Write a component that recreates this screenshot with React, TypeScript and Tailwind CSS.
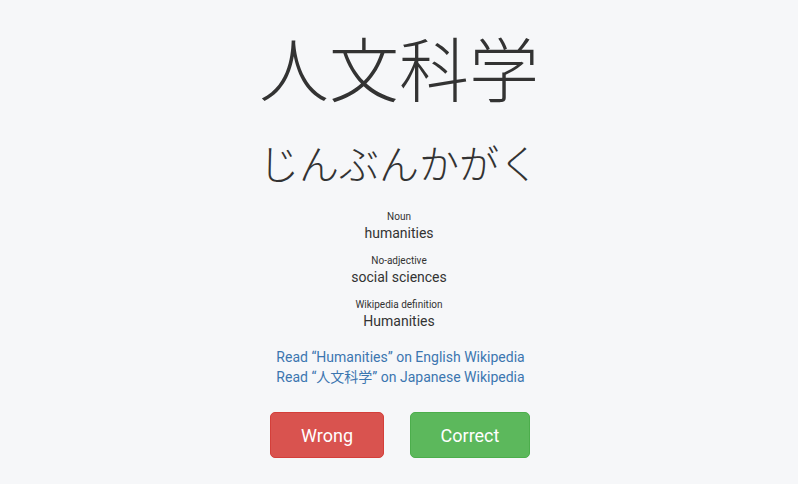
import React from "react";

export default function App() {
  return (
    <div className="w-[798px] h-[484px] bg-[#f6f7f9] text-[#333] flex flex-col items-center" style={{ fontFamily: "Roboto, 'Noto Sans CJK JP', sans-serif" }}>
      <div className="mt-[22px] text-[70px] leading-[90px] font-light" style={{ fontFamily: "'Noto Sans CJK JP', sans-serif" }}>人文科学</div>
      <div className="mt-[25px] text-[40px] leading-[50px] font-light" style={{ fontFamily: "'Noto Sans CJK JP', sans-serif" }}>じんぶんかがく</div>
      <div className="mt-[23px] flex flex-col items-center">
        <div className="text-[10px] leading-[13px]">Noun</div>
        <div className="text-[14px] leading-[20px]">humanities</div>
        <div className="mt-[11px] text-[10px] leading-[13px]">No-adjective</div>
        <div className="text-[14px] leading-[20px]">social sciences</div>
        <div className="mt-[11px] text-[10px] leading-[13px]">Wikipedia definition</div>
        <div className="text-[14px] leading-[20px]">Humanities</div>
      </div>
      <div className="mt-[16px] ml-[3px] flex flex-col items-center text-[14px] leading-[20px] text-[#3c76b0]">
        <a>Read “Humanities” on English Wikipedia</a>
        <a>Read “人文科学” on Japanese Wikipedia</a>
      </div>
      <div className="mt-[25px] ml-[2px] flex gap-[26px]">
        <button className="w-[114px] h-[46px] rounded-[5px] bg-[#d9534f] border border-[#d43f3a] text-white text-[18px]">Wrong</button>
        <button className="w-[120px] h-[46px] rounded-[5px] bg-[#5cb85c] border border-[#4cae4c] text-white text-[18px]">Correct</button>
      </div>
    </div>
  );
}
